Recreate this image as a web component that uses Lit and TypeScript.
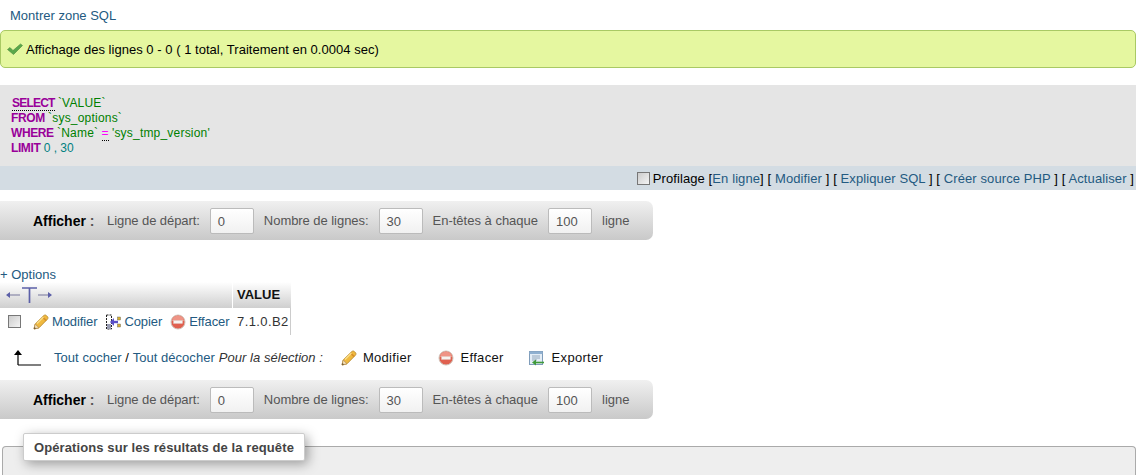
import { LitElement, html, css, svg } from 'lit';
import { customElement } from 'lit/decorators.js';

const pencil = svg`<svg class="ico" width="16" height="16" viewBox="0 0 16 16">
  <path d="M1 15l1.2-5L10.8 1.6c.9-.8 1.9-.7 2.6 0l1 1c.8.9.7 1.8 0 2.6L6 13.8z" fill="#f0b93e" stroke="#b98a2e" stroke-width=".9"/>
  <path d="M9.6 3l3.6 3.6" stroke="#d8902a" stroke-width="1.6"/>
  <path d="M4 9.5l6.5-6.5" stroke="#fbe08c" stroke-width="1.2"/>
  <path d="M1 15l1.2-5 3.8 3.8z" fill="#f5dfb5" stroke="#b08a4a" stroke-width=".7"/>
  <path d="M1 15l.5-2 1.5 1.5z" fill="#5a4a30"/>
</svg>`;

const del = svg`<svg class="ico" width="16" height="16" viewBox="0 0 16 16">
  <circle cx="8" cy="8" r="7" fill="#e0604f" stroke="#cfc4ba" stroke-width="1"/>
  <path d="M2 7a6 5.4 0 0 1 12 0z" fill="#ef9486"/>
  <rect x="3.5" y="6.5" width="9" height="3" fill="#f7f3f0" stroke="#d9c8c0" stroke-width=".4"/>
</svg>`;

const copy = svg`<svg class="ico" width="16" height="16" viewBox="0 0 16 16">
  <rect x="1.5" y="1" width="5" height="14" fill="#fff" stroke="#222" stroke-width="1" stroke-dasharray="2 1"/>
  <rect x="2" y="10" width="4" height="5" fill="#9a9eb4"/>
  <path d="M13 8H8" stroke="#5a50c8" stroke-width="2.4"/>
  <path d="M5 8l4-4v8z" fill="#5a50c8"/>
  <rect x="12.5" y="3" width="3" height="3" fill="#d8b030" stroke="#555" stroke-width=".4"/>
  <rect x="12.5" y="10" width="3" height="3" fill="#d8b030" stroke="#555" stroke-width=".4"/>
</svg>`;

const exportIcon = svg`<svg class="ico" width="16" height="16" viewBox="0 0 16 16">
  <rect x="1.5" y="1.5" width="13" height="13" fill="#e3edf6" stroke="#7f9cba"/>
  <rect x="1.5" y="1.5" width="13" height="2.5" fill="#8fb0d0"/>
  <path d="M4 6h8M4 8h8M4 10h5" stroke="#94a8bc"/>
  <path d="M16 12.5H7" stroke="#3f9a3a" stroke-width="1.6"/>
  <path d="M4 12.5l4-3v6z" fill="#3f9a3a"/>
</svg>`;

@customElement('app-root')
export class AppRoot extends LitElement {
  static styles = css`
    :host {
      display: block;
      height: 475px;
      overflow: hidden;
      font-family: 'Liberation Sans', Arial, sans-serif;
      font-size: 13px;
      color: #000;
      background: #fff;
    }
    a { color: #235a81; text-decoration: none; }
    .ico { display: block; flex: none; }

    .show-sql { padding: 9px 0 0 10px; height: 21px; box-sizing: border-box; line-height: 14px; }

    .notice {
      display: flex;
      align-items: center;
      gap: 3px;
      box-sizing: border-box;
      width: 1136px;
      height: 38px;
      margin-top: 9px;
      padding-left: 6px;
      background: #e5f7a0;
      border: 1px solid #a9c964;
      border-radius: 5px;
      letter-spacing: 0.03px;
    }

    .sql {
      width: 1136px;
      box-sizing: border-box;
      height: 81px;
      margin-top: 17px;
      padding: 11px 0 0 11px;
      background: #e5e5e5;
      line-height: 15px;
      font-size: 12px;
    }
    .sql div { white-space: pre; }
    .kw { color: #990099; font-weight: bold; letter-spacing: -0.4px; }
    .kw.first { border-bottom: 1px dotted #000; margin-left: 1px; letter-spacing: -0.8px; }
    .str { color: #008000; letter-spacing: 0.2px; }
    .num { color: #008080; }
    .op { color: #ff00ff; border-bottom: 1px dotted #000; }

    .tools {
      display: flex;
      justify-content: flex-end;
      align-items: center;
      width: 1136px;
      box-sizing: border-box;
      height: 24px;
      padding-right: 2px;
      background: #d3dce3;
      white-space: pre;
      letter-spacing: 0.1px;
    }
    .fake-check {
      width: 13px;
      height: 13px;
      box-sizing: border-box;
      border: 1px solid #777;
      background: linear-gradient(135deg, #ccc, #f4f4f4);
      flex: none;
    }
    .tools .fake-check { margin-right: 3px; }

    .nav {
      display: flex;
      align-items: center;
      box-sizing: border-box;
      width: 653px;
      height: 39px;
      padding-left: 33px;
      border-radius: 0 7px 7px 0;
      background: linear-gradient(#f0f0f0, #c9c9c9);
      color: #555;
    }
    .nav b { color: #000; font-size: 14px; width: 74px; flex: none; }
    .nav b i { font-style: normal; color: #555; }
    .nav .label { white-space: nowrap; }
    .nav .label.start { letter-spacing: -0.07px; }
    .nav .label.count { letter-spacing: -0.05px; }
    .nav .field {
      box-sizing: border-box;
      width: 44px;
      height: 26px;
      margin: 0 10px;
      padding: 5px 0 0 7px;
      background: linear-gradient(#fff, #f1f1f1);
      border: 1px solid #bbb;
      border-radius: 2px;
      color: #555;
    }
    .nav.top { margin-top: 11px; }

    .options { margin-top: 28px; height: 14px; line-height: 14px; }

    .results { display: grid; grid-template-columns: 232px 59px; width: 291px; }
    .head {
      height: 26px;
      background: linear-gradient(#fff, #cfcfcf);
      display: flex;
      align-items: center;
    }
    .head.left { padding-left: 5px; box-sizing: border-box; }
    .head.val {
      font-weight: bold;
      padding: 0 0 2px 4px;
      border-left: 1px solid #fff;
      box-sizing: border-box;
      color: #111;
    }
    .cell-actions {
      height: 27px;
      display: flex;
      align-items: center;
      padding-left: 8px;
      letter-spacing: -0.1px;
    }
    .cell-actions a { margin-left: 3px; }
    .cell-actions .ico { margin-left: 8px; }
    .cell-actions .fake-check + .ico { margin-left: 12px; }
    .cell-value {
      height: 27px;
      display: flex;
      align-items: center;
      box-sizing: border-box;
      padding-left: 5px;
      border-right: 1px solid #ccc;
      color: #333;
      letter-spacing: 0.4px;
      white-space: nowrap;
    }

    .selection { display: flex; align-items: center; height: 45px; white-space: pre; letter-spacing: 0.04px; }
    .selection .arrow { margin-left: 13px; margin-right: 13px; flex: none; }
    .selection em { margin-left: 4px; color: #333; }
    .sel-act { display: flex; align-items: center; gap: 6px; color: #111; letter-spacing: 0.3px; }
    .sel-act.a1 { margin-left: 18px; }
    .sel-act.a2 { margin-left: 26px; gap: 7px; }
    .sel-act.a3 { margin-left: 24px; gap: 8px; }

    .ops {
      position: relative;
      box-sizing: border-box;
      width: 1134px;
      height: 40px;
      margin: 27px 0 0 2px;
      background: #eee;
      border: 1px solid #aaa;
      border-bottom: none;
      border-radius: 4px 4px 0 0;
    }
    .ops .legend {
      position: absolute;
      left: 20px;
      top: -14px;
      box-sizing: border-box;
      height: 28px;
      padding: 0 10px;
      display: flex;
      align-items: center;
      background: #fff;
      border: 1px solid #ccc;
      border-radius: 2px;
      box-shadow: 3px 3px 12px rgba(0, 0, 0, 0.35);
      font-weight: bold;
      color: #444;
      white-space: nowrap;
      letter-spacing: 0.1px;
    }
  `;

  renderNav(cls: string) {
    return html`<div class="nav ${cls}">
      <b>Afficher <i>:</i></b>
      <span class="label start">Ligne de départ:</span>
      <span class="field">0</span>
      <span class="label count">Nombre de lignes:</span>
      <span class="field">30</span>
      <span class="label">En-têtes à chaque</span>
      <span class="field">100</span>
      <span class="label">ligne</span>
    </div>`;
  }

  render() {
    return html`
      <div class="show-sql"><a href="#">Montrer zone SQL</a></div>
      <div class="notice">
        <svg class="ico" width="16" height="16" viewBox="0 0 16 16">
          <path d="M0.5 8.5l2.5-2 3 3L13.5 3l2 1.5-9 9z" fill="#5aa84a" stroke="#4a8a3c" stroke-width=".6"/>
        </svg>
        <span>Affichage des lignes 0 - 0 ( 1 total, Traitement en 0.0004 sec)</span>
      </div>
      <div class="sql">
        <div><span class="kw first">SELECT</span> <span class="str">\`VALUE\`</span></div>
        <div><span class="kw">FROM</span> <span class="str">\`sys_options\`</span></div>
        <div><span class="kw">WHERE</span> <span class="str">\`Name\`</span> <span class="op">=</span> <span class="str">'sys_tmp_version'</span></div>
        <div><span class="kw">LIMIT</span> <span class="num">0 , 30</span></div>
      </div>
      <div class="tools">
        <span class="fake-check"></span><span>Profilage [<a href="#">En ligne</a>] [ <a href="#">Modifier</a> ] [ <a href="#">Expliquer SQL</a> ] [ <a href="#">Créer source PHP</a> ] [ <a href="#">Actualiser</a> ]</span>
      </div>
      ${this.renderNav('top')}
      <div class="options"><a href="#">+ Options</a></div>
      <div class="results">
        <div class="head left">
          <svg width="48" height="18" viewBox="0 0 48 18">
            <path d="M17 2h15M24.5 2v15" stroke="#5c60a8" stroke-width="1.7" fill="none"/>
            <path d="M3 9h12M33 9h12" stroke="#77779c" stroke-width="1.2" fill="none"/>
            <path d="M1 9l4-3v6zM47 9l-4-3v6z" fill="#5c60a8"/>
          </svg>
        </div>
        <div class="head val">VALUE</div>
        <div class="cell-actions">
          <span class="fake-check"></span>
          ${pencil}<a href="#">Modifier</a>
          ${copy}<a href="#">Copier</a>
          ${del}<a href="#">Effacer</a>
        </div>
        <div class="cell-value">7.1.0.B2</div>
      </div>
      <div class="selection">
        <svg class="arrow" width="28" height="18" viewBox="0 0 28 18">
          <path d="M5 16V4M5 16h23" stroke="#000" stroke-width="1.2" fill="none"/>
          <path d="M5 1l4 5H1z" fill="#000"/>
        </svg>
        <a href="#">Tout cocher</a> / <a href="#">Tout décocher</a>
        <em>Pour la sélection :</em>
        <span class="sel-act a1">${pencil}Modifier</span>
        <span class="sel-act a2">${del}Effacer</span>
        <span class="sel-act a3">${exportIcon}Exporter</span>
      </div>
      ${this.renderNav('bottom')}
      <div class="ops">
        <div class="legend">Opérations sur les résultats de la requête</div>
      </div>
    `;
  }
}
